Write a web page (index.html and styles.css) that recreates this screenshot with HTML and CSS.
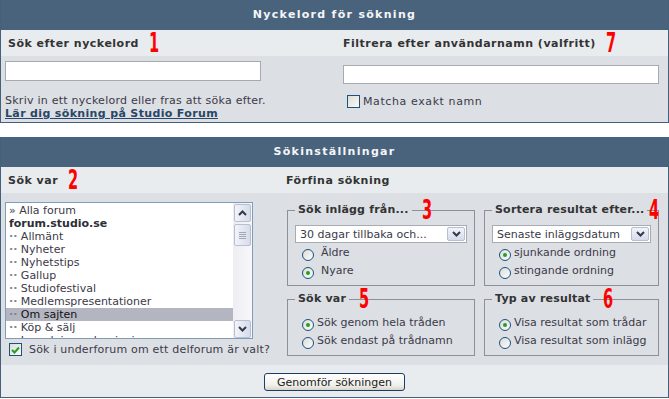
FILE: index.html
```html
<!DOCTYPE html>
<html lang="sv">
<head>
    <meta charset="UTF-8">
    <title>Sök - Studio Forum</title>
    <link rel="stylesheet" href="styles.css">
</head>
<body>
    <div class="page">
        <!-- Nyckelord -->
        <div class="panel">
            <div class="panel-head">Nyckelord för sökning</div>
            <div class="panel-grid kw-grid">
                <div class="sub"><span class="label">Sök efter nyckelord<span class="mark">1</span></span></div>
                <div class="sub sub-right"><span class="label">Filtrera efter användarnamn (valfritt)<span class="mark">7</span></span></div>
                <div class="cell kw-left">
                    <input type="text" class="text-input kw-input">
                    <p class="hint">Skriv in ett nyckelord eller fras att söka efter.</p>
                    <a href="#" class="help-link">Lär dig sökning på Studio Forum</a>
                </div>
                <div class="cell kw-right">
                    <input type="text" class="text-input user-input">
                    <div class="check-row check-row-user">
                        <span class="checkbox"></span>
                        <span>Matcha exakt namn</span>
                    </div>
                </div>
            </div>
        </div>

        <!-- Inställningar -->
        <div class="panel">
            <div class="panel-head">Sökinställningar</div>
            <div class="panel-grid opt-grid">
                <div class="sub"><span class="label">Sök var<span class="mark">2</span></span></div>
                <div class="sub sub-refine"><span class="label">Förfina sökning</span></div>
                <div class="cell opt-left">
                    <div class="listbox">
                        <ul class="list-items">
                            <li>» Alla forum</li>
                            <li class="cat">forum.studio.se</li>
                            <li><span class="dots">··</span> Allmänt</li>
                            <li><span class="dots">··</span> Nyheter</li>
                            <li><span class="dots">··</span> Nyhetstips</li>
                            <li><span class="dots">··</span> Gallup</li>
                            <li><span class="dots">··</span> Studiofestival</li>
                            <li><span class="dots">··</span> Medlemspresentationer</li>
                            <li class="selected"><span class="dots">··</span> Om sajten</li>
                            <li><span class="dots">··</span> Köp &amp; sälj</li>
                            <li class="peek"><span class="dots">··</span> Inspelning och mixning</li>
                        </ul>
                        <div class="scrollbar">
                            <span class="sb-btn"><svg width="9" height="6" viewBox="0 0 9 6"><path d="M1 5 L4.5 1.5 L8 5" fill="none" stroke="#2f3a4d" stroke-width="2"/></svg></span>
                            <span class="sb-thumb"><span></span><span></span><span></span><span></span></span>
                            <span class="sb-track"></span>
                            <span class="sb-btn"><svg width="9" height="6" viewBox="0 0 9 6"><path d="M1 1 L4.5 4.5 L8 1" fill="none" stroke="#2f3a4d" stroke-width="2"/></svg></span>
                        </div>
                    </div>
                    <div class="check-row check-row-sub">
                        <span class="checkbox checked"><svg width="9" height="8" viewBox="0 0 9 8"><path d="M1 4 L3.5 6.5 L8 1.5" fill="none" stroke="#21a121" stroke-width="2"/></svg></span>
                        <span>Sök i underforum om ett delforum är valt?</span>
                    </div>
                </div>
                <div class="cell opt-right">
                    <fieldset class="group group-top">
                        <legend>Sök inlägg från...<span class="mark">3</span></legend>
                        <div class="select">
                            <span>30 dagar tillbaka och...</span>
                            <span class="select-btn"><svg width="9" height="6" viewBox="0 0 9 6"><path d="M1 1 L4.5 4.5 L8 1" fill="none" stroke="#2f3a4d" stroke-width="2"/></svg></span>
                        </div>
                        <div class="radio-row wide"><span class="radio"></span>Äldre</div>
                        <div class="radio-row wide"><span class="radio on"></span>Nyare</div>
                    </fieldset>
                    <fieldset class="group group-top">
                        <legend>Sortera resultat efter...<span class="mark mark-edge">4</span></legend>
                        <div class="select">
                            <span>Senaste inläggsdatum</span>
                            <span class="select-btn"><svg width="9" height="6" viewBox="0 0 9 6"><path d="M1 1 L4.5 4.5 L8 1" fill="none" stroke="#2f3a4d" stroke-width="2"/></svg></span>
                        </div>
                        <div class="radio-row"><span class="radio on"></span>sjunkande ordning</div>
                        <div class="radio-row"><span class="radio"></span>stingande ordning</div>
                    </fieldset>
                    <fieldset class="group group-bottom">
                        <legend>Sök var<span class="mark">5</span></legend>
                        <div class="radio-row"><span class="radio on"></span>Sök genom hela tråden</div>
                        <div class="radio-row"><span class="radio"></span>Sök endast på trådnamn</div>
                    </fieldset>
                    <fieldset class="group group-bottom">
                        <legend>Typ av resultat<span class="mark">6</span></legend>
                        <div class="radio-row"><span class="radio on"></span>Visa resultat som trådar</div>
                        <div class="radio-row"><span class="radio"></span>Visa resultat som inlägg</div>
                    </fieldset>
                </div>
            </div>
            <div class="panel-foot">
                <button type="button" class="button">Genomför sökningen</button>
            </div>
        </div>
    </div>
</body>
</html>
```

FILE: styles.css
```css
body {
    margin: 0;
    font-family: "DejaVu Sans", Verdana, sans-serif;
    font-size: 11px;
    color: #3b3a48;
    background-color: white;
}
.page {
    width: 669px;
}
.panel {
    border: 1px solid #45607a;
    border-top: 0;
    margin-bottom: 14px;
}
.panel-head {
    height: 30px;
    line-height: 30px;
    background-color: #4a637c;
    color: #f4f6f8;
    font-weight: bold;
    text-align: center;
    letter-spacing: 1.3px;
}
.panel-grid {
    display: grid;
    background-color: #dcdfe4;
}
.kw-grid {
    grid-template-columns: 335px 1fr;
    grid-template-rows: 26px 66px;
}
.opt-grid {
    grid-template-columns: 279px 1fr;
    grid-template-rows: 26px 172px;
}
.sub {
    background-color: #e9ecef;
    padding-left: 7px;
    display: flex;
    align-items: center;
    font-weight: bold;
    letter-spacing: 0.5px;
    color: #333;
}
.sub-right {
    padding-left: 7px;
}
.sub-refine {
    padding-left: 6px;
}
.label {
    position: relative;
}
.mark {
    position: absolute;
    left: 100%;
    top: 50%;
    margin-left: 10px;
    margin-top: -15px;
    font-family: "DejaVu Sans Condensed", "DejaVu Sans", sans-serif;
    font-weight: bold;
    font-size: 27px;
    line-height: 30px;
    color: #f00;
    letter-spacing: 0;
    transform: scaleX(0.6);
    transform-origin: left center;
}
.text-input {
    display: block;
    box-sizing: border-box;
    border: 1px solid #a5a9b0;
    background: white;
    margin: 0;
    padding: 0;
}
.kw-left {
    padding: 5px 0 0 4px;
}
.kw-input {
    width: 256px;
    height: 20px;
}
.hint {
    margin: 13px 0 0;
    letter-spacing: 0.25px;
    line-height: 13px;
}
.help-link {
    display: block;
    line-height: 13px;
    font-weight: bold;
    letter-spacing: 0.35px;
    color: #284766;
}
.kw-right {
    padding: 9px 9px 0 7px;
}
.user-input {
    width: 100%;
    height: 19px;
}
.check-row {
    display: flex;
    align-items: center;
    gap: 3px;
}
.check-row-user {
    margin: 11px 0 0 4px;
    letter-spacing: 0.6px;
}
.checkbox {
    box-sizing: border-box;
    width: 13px;
    height: 13px;
    border: 1px solid #1c5180;
    background: linear-gradient(135deg, #dcdcd7, #fafafa);
    display: flex;
    align-items: center;
    justify-content: center;
}
.opt-left {
    padding: 9px 0 0 4px;
}
.listbox {
    display: flex;
    width: 248px;
    height: 137px;
    box-sizing: border-box;
    border: 1px solid #7f9db9;
    background: white;
    overflow: hidden;
}
.list-items {
    flex: 1;
    list-style: none;
    margin: 0;
    padding: 1px 0 0;
    height: 135px;
    box-sizing: border-box;
    line-height: 13px;
    white-space: nowrap;
    overflow: hidden;
}
.list-items li {
    padding-left: 3px;
}
.list-items .cat {
    font-weight: bold;
    color: #2e2e36;
}
.list-items .selected {
    background-color: #b3b5c0;
    color: #111;
}
.dots {
    color: #7e8794;
    font-weight: bold;
}
.scrollbar {
    width: 19px;
    display: flex;
    flex-direction: column;
    background: linear-gradient(90deg, #eeedf2, #f8f8fa);
}
.sb-btn {
    box-sizing: border-box;
    height: 18px;
    margin: 1px 1px 0 1px;
    border: 1px solid #b7bfd3;
    border-radius: 2px;
    background: linear-gradient(90deg, #f3f4f9, #d6dbea);
    display: flex;
    align-items: center;
    justify-content: center;
}
.sb-thumb {
    box-sizing: border-box;
    height: 22px;
    margin: 2px 1px 0 1px;
    border: 1px solid #b7bfd3;
    border-radius: 2px;
    background: linear-gradient(90deg, #f3f4f9, #d8dcea);
    display: flex;
    flex-direction: column;
    align-items: center;
    justify-content: center;
    gap: 1px;
}
.sb-thumb span {
    width: 7px;
    height: 1px;
    background-color: #9ea6bc;
}
.sb-track {
    flex: 1;
}
.check-row-sub {
    margin: 4px 0 0 4px;
    gap: 7px;
    letter-spacing: 0.2px;
}
.opt-right {
    display: grid;
    grid-template-columns: 188px 175px;
    grid-template-rows: 83px 64px;
    column-gap: 9px;
    row-gap: 6px;
    padding: 10px 0 0 7px;
}
.group {
    margin: 0;
    padding: 0 7px;
    border: 1px solid #8d9096;
    min-width: 0;
}
.group legend {
    position: relative;
    padding: 0 3px;
    font-weight: bold;
    letter-spacing: 0.2px;
    line-height: 14px;
    white-space: nowrap;
    color: #333;
}
.group-top {
    padding-top: 8px;
}
.group-bottom {
    padding-top: 10px;
}
.mark-edge {
    margin-left: 2px;
}
.select {
    box-sizing: border-box;
    height: 18px;
    border: 1px solid #a7abb2;
    background: white;
    display: flex;
    align-items: center;
    justify-content: space-between;
    padding: 0 1px 0 4px;
    margin-bottom: 3px;
}
.select-btn {
    box-sizing: border-box;
    width: 18px;
    height: 14px;
    border: 1px solid #b7bfd3;
    border-radius: 2px;
    background: linear-gradient(180deg, #f3f4f9, #d6dbea);
    display: flex;
    align-items: center;
    justify-content: center;
}
.radio-row {
    display: flex;
    align-items: flex-start;
    height: 18px;
    line-height: 14px;
    gap: 3px;
    padding-left: 7px;
}
.radio-row.wide {
    gap: 7px;
}
.radio {
    box-sizing: border-box;
    width: 12px;
    height: 12px;
    margin-top: 3px;
    border: 1px solid #1c5180;
    border-radius: 50%;
    background: linear-gradient(135deg, #dcdcd7, #fcfcfc);
    display: flex;
    align-items: center;
    justify-content: center;
}
.radio.on::after {
    content: "";
    width: 4px;
    height: 4px;
    border-radius: 50%;
    background-color: #21a121;
}
.panel-foot {
    height: 32px;
    background-color: #e9ecef;
    display: flex;
    justify-content: center;
    align-items: center;
}
.button {
    font-family: "DejaVu Sans", Verdana, sans-serif;
    font-size: 11px;
    color: #222;
    width: 141px;
    height: 18px;
    padding: 0;
    margin-top: 2px;
    border: 1px solid #1e3d66;
    border-radius: 3px;
    background: linear-gradient(180deg, #ffffff, #f0f0ec 70%, #d8d6cc);
}
```
